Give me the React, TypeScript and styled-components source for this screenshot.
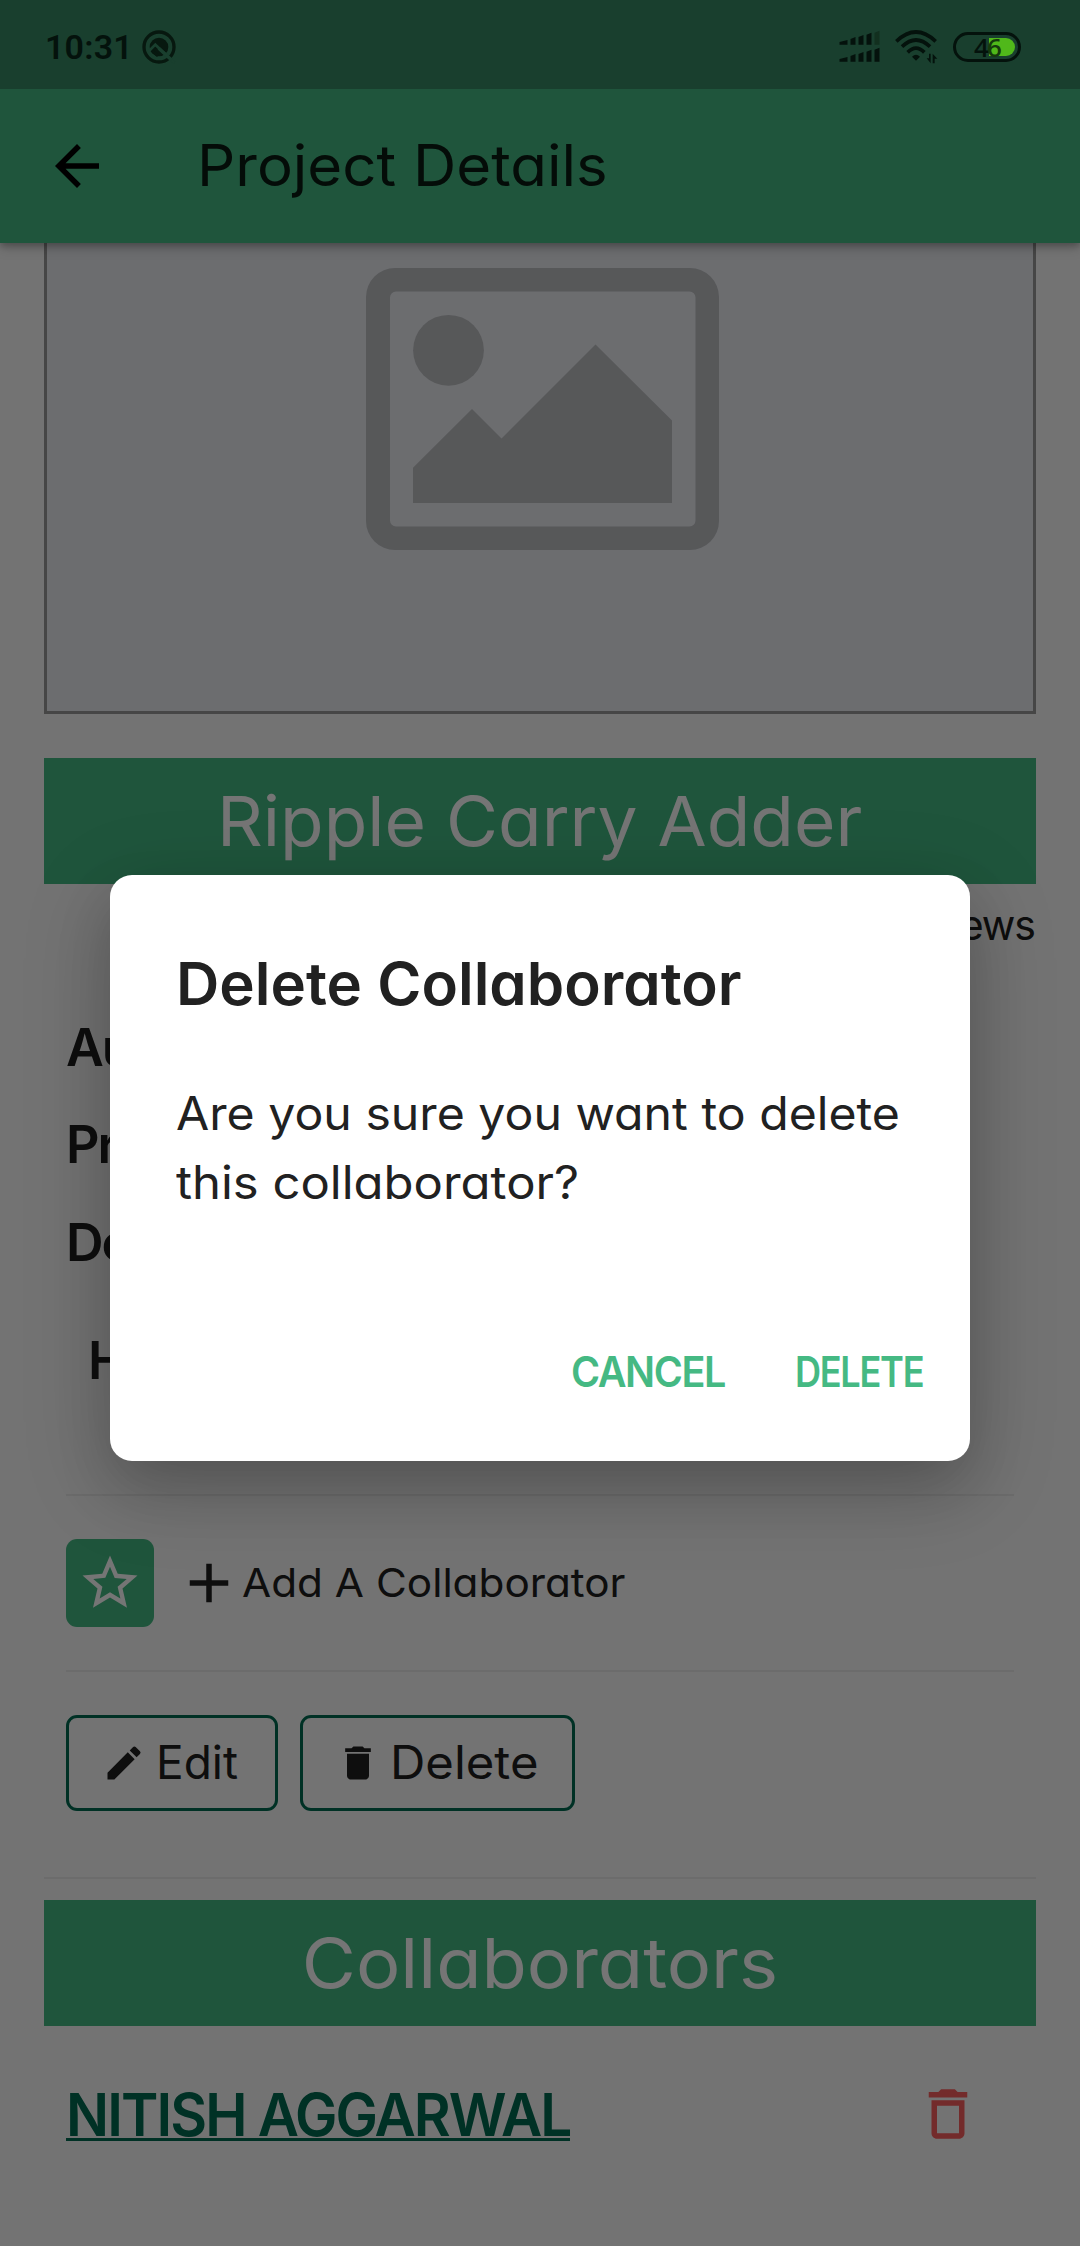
import React from 'react';
import styled, { createGlobalStyle } from 'styled-components';
import { MdAdd, MdArrowBack, MdDelete, MdDeleteOutline, MdEdit, MdStarBorder } from 'react-icons/md';

const color = {
  primary: '#45b983',
  primaryDark: '#016b52',
  statusBar: '#193f2e',
  surface: '#fafafa',
  ink: '#202020',
  divider: '#ebebeb',
  danger: '#fa5e5e',
  placeholder: '#ebedf1',
  placeholderInk: '#bdbfc3',
};

const GlobalStyle = createGlobalStyle`
  * { box-sizing: border-box; }
  body {
    margin: 0;
    overflow: hidden;
    background: ${color.surface};
    color: ${color.ink};
    font-family: Inter, 'Liberation Sans', sans-serif;
    font-feature-settings: 'cv11';
  }
  svg { display: block; flex: none; overflow: visible; }
`;

const Screen = styled.div`
  position: relative;
  display: flex;
  flex-direction: column;
  width: 1080px;
  height: 2246px;
  overflow: hidden;
  background: ${color.surface};
`;

const StatusBar = styled.header`
  position: relative;
  z-index: 3;
  display: flex;
  align-items: center;
  justify-content: space-between;
  height: 89px;
  flex: none;
  padding: 0 58px 0 45px;
  background: ${color.statusBar};
  color: #04120c;
`;

const StatusGroup = styled.div<{ $gap: number }>`
  display: flex;
  align-items: center;
  gap: ${p => p.$gap}px;
  padding-top: 4px;
`;

const Clock = styled.span`
  width: 97px;
  padding-top: 1px;
  font-family: Roboto, sans-serif;
  font-size: 34px;
  font-weight: 600;
  line-height: 40px;
  letter-spacing: 0.2px;
  white-space: nowrap;
`;

const AppBar = styled.div`
  position: relative;
  z-index: 1;
  display: flex;
  align-items: center;
  gap: 87px;
  height: 154px;
  flex: none;
  padding: 0 44px;
  background: ${color.primary};
  color: #000;
  box-shadow: 0 3px 7px rgba(0, 0, 0, 0.26), 0 6px 12px rgba(0, 0, 0, 0.12);
`;

const AppTitle = styled.h1`
  margin: 0;
  color: #0a1b13;
  font-size: 57px;
  font-weight: 400;
  line-height: 154px;
`;

const Content = styled.main`
  display: flex;
  flex-direction: column;
  padding: 0 44px;
`;

const Preview = styled.div`
  display: flex;
  justify-content: center;
  height: 471px;
  padding: 25px 0 0 5px;
  border: 3px solid #999;
  border-top: 0;
  background: ${color.placeholder};
`;

/* Widens or condenses the letterforms without touching their height. */
const Stretch = styled.span<{ $scale: number; $width?: number; $origin?: string }>`
  display: inline-block;
  width: ${p => (p.$width ? `${p.$width}px` : 'auto')};
  white-space: nowrap;
  text-align: left;
  transform: scaleX(${p => p.$scale});
  transform-origin: ${p => p.$origin || 'left'} center;
`;

const Banner = styled.h2<{ $top: number; $shift?: number }>`
  height: 126px;
  margin: ${p => p.$top}px 0 0;
  padding-left: ${p => p.$shift || 0}px;
  background: ${color.primary};
  color: #fff;
  font-size: 69px;
  font-weight: 400;
  line-height: 126px;
  text-align: center;
`;

const Views = styled.div`
  height: 82px;
  padding-right: 1px;
  font-size: 41px;
  line-height: 82px;
  letter-spacing: -1px;
  text-align: right;
`;

const Details = styled.section`
  display: flex;
  flex-direction: column;
  padding: 33px 22px 0;
`;

const Label = styled.div<{ $height: number; $indent?: number; $top?: number }>`
  height: ${p => p.$height}px;
  margin: ${p => p.$top || 0}px 0 0 ${p => p.$indent || 0}px;
  font-size: 52px;
  font-weight: 560;
  line-height: ${p => p.$height}px;
  letter-spacing: -2px;
`;

const Divider = styled.hr<{ $top: number }>`
  width: 100%;
  height: 2px;
  margin: ${p => p.$top}px 0 0;
  border: 0;
  background: ${color.divider};
`;

const ActionRow = styled.div<{ $gap: number }>`
  display: flex;
  align-items: center;
  gap: ${p => p.$gap}px;
  margin-top: 43px;
`;

const StarButton = styled.button`
  display: grid;
  place-items: center;
  width: 88px;
  height: 88px;
  padding: 0;
  border: 0;
  border-radius: 11px;
  background: ${color.primary};
  color: #fff;
`;

const AddButton = styled.button`
  display: flex;
  align-items: center;
  padding: 0;
  border: 0;
  background: none;
  color: ${color.ink};
  font: inherit;
  font-size: 40px;
  line-height: 88px;
`;

const OutlineButton = styled.button<{ $width: number }>`
  display: flex;
  align-items: center;
  gap: 10px;
  width: ${p => p.$width}px;
  height: 96px;
  padding: 0 0 0 33px;
  border: 3px solid ${color.primaryDark};
  border-radius: 11px;
  background: none;
  color: ${color.ink};
  font: inherit;
  font-size: 46px;
  line-height: 84px;

  span { margin-bottom: 3px; }
`;

const CollaboratorRow = styled.div`
  display: flex;
  align-items: center;
  justify-content: space-between;
  height: 175px;
  padding: 0 55px 0 22px;
`;

const CollaboratorLink = styled.a`
  display: block;
  height: 59px;
  margin-top: -4px;
  border-bottom: 3px solid ${color.primaryDark};
  color: ${color.primaryDark};
  font-size: 59px;
  font-weight: 560;
  line-height: 66px;
  letter-spacing: -2px;
`;

const Scrim = styled.div`
  position: absolute;
  inset: 0;
  z-index: 2;
  display: flex;
  align-items: center;
  justify-content: center;
  padding-top: 89px;
  background: rgba(0, 0, 0, 0.54);
`;

const Dialog = styled.div`
  display: flex;
  flex-direction: column;
  width: 860px;
  height: 586px;
  padding: 66px 44px 45px 66px;
  border-radius: 22px;
  background: #fff;
  color: #212121;
  box-shadow: 0 26px 56px rgba(0, 0, 0, 0.14), 0 22px 90px rgba(0, 0, 0, 0.19);
`;

const DialogTitle = styled.h3`
  margin: 0;
  font-size: 59px;
  font-weight: 560;
  line-height: 86px;
`;

const DialogText = styled.p`
  display: flex;
  flex-direction: column;
  align-items: flex-start;
  margin: 52px 0 0;
  font-size: 46px;
  line-height: 69px;
`;

const DialogActions = styled.div`
  display: flex;
  justify-content: flex-end;
  gap: 68px;
  margin-top: auto;
`;

const DialogButton = styled.button`
  padding: 0;
  border: 0;
  background: none;
  color: ${color.primary};
  font: inherit;
  font-size: 42px;
  font-weight: 580;
  line-height: 88px;
  letter-spacing: -1.5px;
`;

const AssistantIcon = () => (
  <svg width="34" height="34" viewBox="0 0 102 102" fill="none">
    <circle cx="51" cy="51" r="45" stroke="#07180f" strokeWidth="10" />
    <circle cx="51" cy="51" r="28" fill="#07180f" />
    <path d="M18 66 40 44 97 98" stroke={color.statusBar} strokeWidth="8" />
    <path d="M31 62 48 78" stroke="#07180f" strokeWidth="9" />
    <path d="m50 55 38 34" stroke={color.statusBar} strokeWidth="10" />
  </svg>
);

const bars = [
  [0, 29, 24], [33, 20, 15], [57, 14, 15], [81, 7, 15], [105, 1, 15],
];

const SignalIcon = () => (
  <svg width="41" height="32" viewBox="0 0 120 96">
    {[0, 51].map(offset =>
      bars.map(([x, y, w], i) => (
        <path
          key={`${offset}-${x}`}
          d={`M${x} ${41 + offset}V${y + offset + 4}L${x + w} ${y + offset - 2}V${41 + offset}Z`}
          fill={offset === 0 && i === 4 ? '#12301f' : '#04120c'}
        />
      )),
    )}
  </svg>
);

const WifiIcon = () => (
  <svg width="43" height="34" viewBox="0 0 129 102" fill="none" stroke="#04120c">
    <path d="M4 34Q63-22 122 34" strokeWidth="11" />
    <path d="M21 50Q63 10 105 50" strokeWidth="11" />
    <path d="M38 67Q63 42 88 67" strokeWidth="11" />
    <path d="M51 80Q63 69 75 80L63 92Z" fill="#04120c" stroke="none" />
    <path d="M107 71V100L95 85H102V71ZM113 100V71L127 86H119V100Z" fill="#04120c" stroke="none" />
  </svg>
);

const BatteryIcon = () => (
  <svg width="69" height="30" viewBox="0 0 69 30">
    <rect x="1.5" y="1.5" width="65" height="27" rx="13.5" fill="none" stroke="#04120c" strokeWidth="3" />
    <path d="M36 6H53A9 9 0 0 1 53 24H36Z" fill="#50b81a" />
    <g fontFamily="'Open Sans', sans-serif" fontSize="26" fontWeight="600">
      <text x="21" y="24.5" fill="#04120c">4</text>
      <text x="34" y="24.5" fill="#153a0d">6</text>
    </g>
  </svg>
);

const PlaceholderImage = () => (
  <svg width="353" height="282" viewBox="0 0 353 282" fill={color.placeholderInk}>
    <path
      fillRule="evenodd"
      d="M29 0H324A29 29 0 0 1 353 29V253A29 29 0 0 1 324 282H29A29 29 0 0 1 0 253V29A29 29 0 0 1 29 0ZM30 23.5A6 6 0 0 0 24 29.5V252.5A6 6 0 0 0 30 258.5H323.5A6 6 0 0 0 329.5 252.5V29.5A6 6 0 0 0 323.5 23.5Z"
    />
    <circle cx="82.5" cy="82.3" r="35.4" />
    <path d="M47 235V199.7L106 141 135.5 170.5 229.5 76.5 306 152.5V235Z" />
  </svg>
);

export default function App() {
  return (
    <Screen>
      <GlobalStyle />
      <StatusBar>
        <StatusGroup $gap={0}>
          <Clock>10:31</Clock>
          <AssistantIcon />
        </StatusGroup>
        <StatusGroup $gap={15}>
          <SignalIcon />
          <WifiIcon />
          <BatteryIcon />
        </StatusGroup>
      </StatusBar>

      <AppBar>
        <MdArrowBack size={66} />
        <AppTitle>
          <Stretch $scale={1.052}>Project Details</Stretch>
        </AppTitle>
      </AppBar>

      <Content>
        <Preview>
          <PlaceholderImage />
        </Preview>
        <Banner $top={44}>
          <Stretch $scale={1.032} $origin="center">Ripple Carry Adder</Stretch>
        </Banner>
        <Views>Views</Views>

        <Details>
          <Label $height={97}>Author:</Label>
          <Label $height={97}>Project:</Label>
          <Label $height={100}>Details:</Label>
          <Label $height={98} $top={19} $indent={22}>H</Label>

          <Divider $top={84} />
          <ActionRow $gap={22}>
            <StarButton aria-label="Star project">
              <MdStarBorder size={66} />
            </StarButton>
            <AddButton>
              <MdAdd size={66} />
              <Stretch $scale={1.057}>Add A Collaborator</Stretch>
            </AddButton>
          </ActionRow>

          <Divider $top={43} />
          <ActionRow $gap={22}>
            <OutlineButton $width={212}>
              <MdEdit size={44} />
              <Stretch $scale={1}>Edit</Stretch>
            </OutlineButton>
            <OutlineButton $width={275}>
              <MdDelete size={44} />
              <Stretch $scale={1.065}>Delete</Stretch>
            </OutlineButton>
          </ActionRow>
        </Details>

        <Divider $top={66} />
        <Banner $top={21}>
          <Stretch $scale={1.073} $origin="center">Collaborators</Stretch>
        </Banner>
        <CollaboratorRow>
          <CollaboratorLink>
            <Stretch $width={504} $scale={0.961}>NITISH AGGARWAL</Stretch>
          </CollaboratorLink>
          <MdDeleteOutline size={66} color={color.danger} />
        </CollaboratorRow>
      </Content>

      <Scrim>
        <Dialog role="dialog">
          <DialogTitle>
            <Stretch $scale={1.017}>Delete Collaborator</Stretch>
          </DialogTitle>
          <DialogText>
            <Stretch $scale={1.048}>Are you sure you want to delete</Stretch>
            <Stretch $scale={1.065}>this collaborator?</Stretch>
          </DialogText>
          <DialogActions>
            <DialogButton>
              <Stretch $width={156} $scale={0.942}>CANCEL</Stretch>
            </DialogButton>
            <DialogButton>
              <Stretch $width={131} $scale={0.86}>DELETE</Stretch>
            </DialogButton>
          </DialogActions>
        </Dialog>
      </Scrim>
    </Screen>
  );
}
